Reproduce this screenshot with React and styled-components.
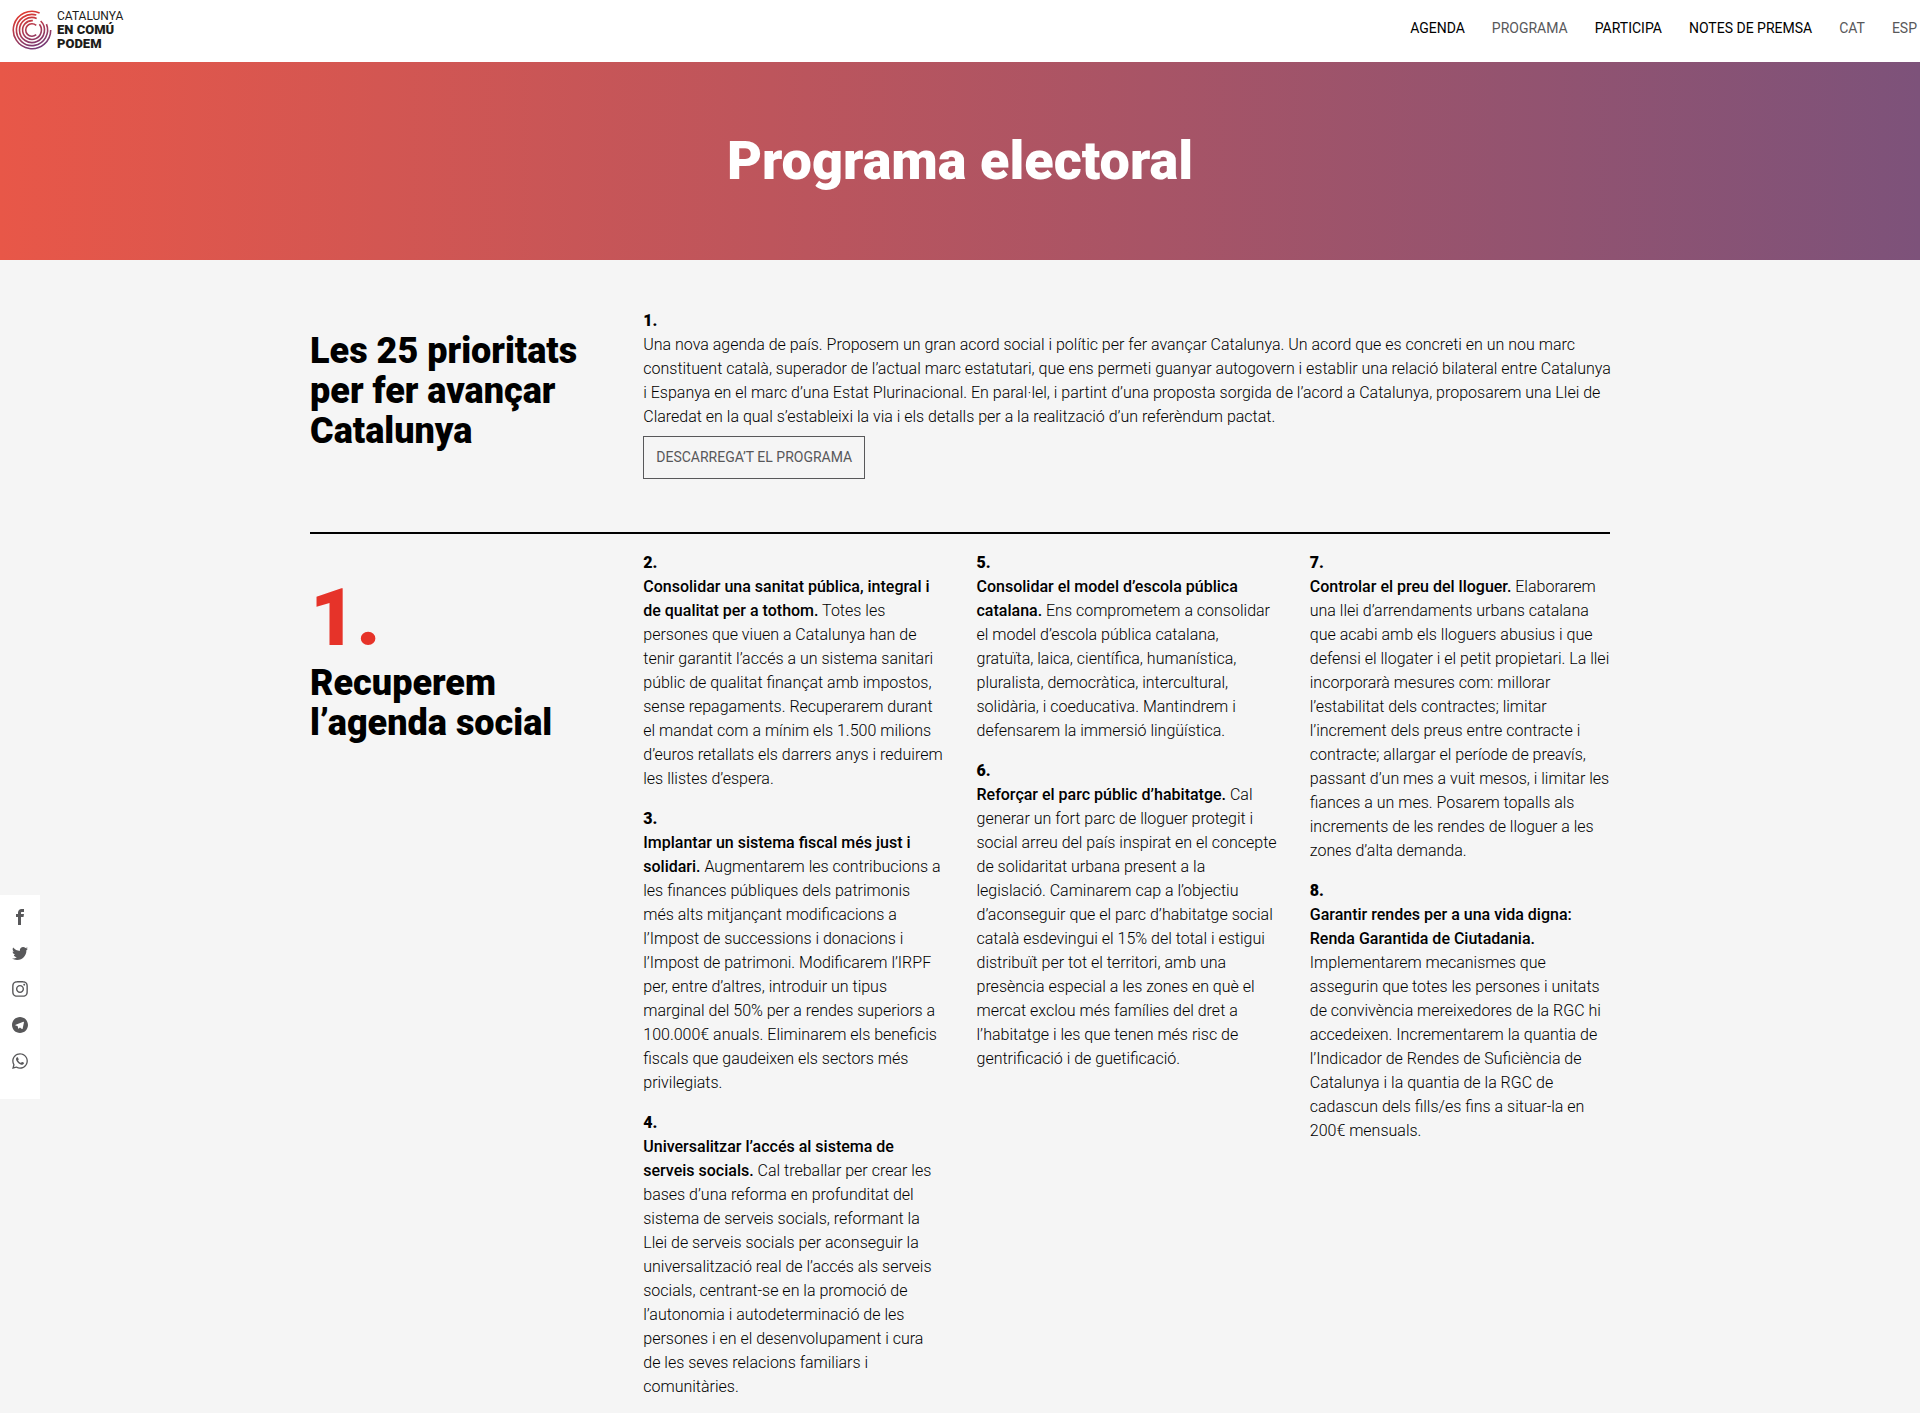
import React from "react";
import styled, { createGlobalStyle } from "styled-components";
import { ImFacebook, ImTwitter, ImTelegram } from "react-icons/im";
import { FaInstagram, FaWhatsapp } from "react-icons/fa";

const bodyFont = `Roboto, "Liberation Sans", sans-serif`;

const GlobalStyle = createGlobalStyle`
  *, *::before, *::after { box-sizing: border-box; }
  body {
    margin: 0;
    background: #f5f5f5;
    color: #000;
    font: 300 16px/24px ${bodyFont};
  }
  h1, h2, h3, p { margin: 0; }
  a { color: inherit; text-decoration: none; }
`;

const Header = styled.header`
  display: flex;
  justify-content: space-between;
  align-items: flex-start;
  height: 62px;
  padding: 0 3px 0 12px;
  background: #fff;
`;

const Brand = styled.a`
  display: flex;
  align-items: center;
  gap: 5px;
  padding-top: 9px;
  svg { display: block; }
`;

const BrandName = styled.span`
  display: flex;
  flex-direction: column;
  font: 400 12px/14px ${bodyFont};
  color: #1d1d1b;
  strong {
    font-size: 13px;
    font-weight: 900;
  }
`;

const Nav = styled.nav`
  display: flex;
  gap: 27px;
  padding-top: 16px;
`;

const NavLink = styled.a`
  font-size: 14px;
  font-weight: 400;
  text-transform: uppercase;
  color: ${({ $muted }) => ($muted ? "#58585a" : "#000")};
`;

const Hero = styled.section`
  padding: 64px 20px;
  background: linear-gradient(90deg, #e85748 0%, #7d527a 100%);
`;

const HeroTitle = styled.h1`
  font: 900 54px/70px ${bodyFont};
  color: #fff;
  text-align: center;
`;

const Main = styled.main`
  max-width: 1340px;
  margin: 0 auto;
  padding: 0 20px;
`;

const Section = styled.section`
  display: grid;
  grid-template-columns: repeat(4, 1fr);
  column-gap: 33px;
  padding: ${({ $intro }) => ($intro ? "48px 0 53px" : "16px 0 24px")};
  border-bottom: ${({ $intro }) => ($intro ? "2px solid #000" : "0")};
`;

const SectionHead = styled.div`
  padding-top: 23px;
`;

const SectionNumber = styled.div`
  font: 900 80px/90px ${bodyFont};
  color: #e63329;
`;

const SectionTitle = styled.h2`
  font: 900 36px/40px ${bodyFont};
`;

const Lead = styled.div`
  grid-column: span 3;
  margin-right: -4px;
`;

const ItemNumber = styled.h3`
  padding-top: 1px;
  font: 900 16px/24px ${bodyFont};
`;

const Column = styled.div`
  display: flex;
  flex-direction: column;
  gap: 15px;
`;

const ItemText = styled.p`
  strong { font-weight: 500; }
`;

const Download = styled.a`
  display: inline-block;
  margin-top: 7px;
  padding: 8px 12px 9px;
  border: 1px solid #58585a;
  font-size: 14px;
  font-weight: 400;
  text-transform: uppercase;
  color: #58585a;
  vertical-align: top;
`;

const Share = styled.aside`
  position: fixed;
  left: 0;
  top: 895px;
  display: flex;
  flex-direction: column;
  gap: 20px;
  padding: 14px 12px 30px;
  background: #fff;
`;

const ShareLink = styled.a`
  display: flex;
  align-items: center;
  justify-content: center;
  width: 16px;
  height: 16px;
  color: #58585a;
  svg { flex: none; }
`;

const navItems = [
  ["Agenda"],
  ["Programa", true],
  ["Participa"],
  ["Notes de premsa"],
  ["Cat", true],
  ["Esp", true],
];

const networks = [
  ["Facebook", ImFacebook, 16],
  ["Twitter", ImTwitter, 16],
  ["Instagram", FaInstagram, 18],
  ["Telegram", ImTelegram, 16],
  ["WhatsApp", FaWhatsapp, 18],
];

const columns = [
  [
    [2, "Consolidar una sanitat pública, integral i de qualitat per a tothom.", "Totes les persones que viuen a Catalunya han de tenir garantit l’accés a un sistema sanitari públic de qualitat finançat amb impostos, sense repagaments. Recuperarem durant el mandat com a mínim els 1.500 milions d’euros retallats els darrers anys i reduirem les llistes d’espera."],
    [3, "Implantar un sistema fiscal més just i solidari.", "Augmentarem les contribucions a les finances públiques dels patrimonis més alts mitjançant modificacions a l’Impost de successions i donacions i l’Impost de patrimoni. Modificarem l’IRPF per, entre d’altres, introduir un tipus marginal del 50% per a rendes superiors a 100.000€ anuals. Eliminarem els beneficis fiscals que gaudeixen els sectors més privilegiats."],
    [4, "Universalitzar l’accés al sistema de serveis socials.", "Cal treballar per crear les bases d’una reforma en profunditat del sistema de serveis socials, reformant la Llei de serveis socials per aconseguir la universalització real de l’accés als serveis socials, centrant-se en la promoció de l’autonomia i autodeterminació de les persones i en el desenvolupament i cura de les seves relacions familiars i comunitàries."],
  ],
  [
    [5, "Consolidar el model d’escola pública catalana.", "Ens comprometem a consolidar el model d’escola pública catalana, gratuïta, laica, científica, humanística, pluralista, democràtica, intercultural, solidària, i coeducativa. Mantindrem i defensarem la immersió lingüística."],
    [6, "Reforçar el parc públic d’habitatge.", "Cal generar un fort parc de lloguer protegit i social arreu del país inspirat en el concepte de solidaritat urbana present a la legislació. Caminarem cap a l’objectiu d’aconseguir que el parc d’habitatge social català esdevingui el 15% del total i estigui distribuït per tot el territori, amb una presència especial a les zones en què el mercat exclou més famílies del dret a l’habitatge i les que tenen més risc de gentrificació i de guetificació."],
  ],
  [
    [7, "Controlar el preu del lloguer.", "Elaborarem una llei d’arrendaments urbans catalana que acabi amb els lloguers abusius i que defensi el llogater i el petit propietari. La llei incorporarà mesures com: millorar l’estabilitat dels contractes; limitar l’increment dels preus entre contracte i contracte; allargar el període de preavís, passant d’un mes a vuit mesos, i limitar les fiances a un mes. Posarem topalls als increments de les rendes de lloguer a les zones d’alta demanda."],
    [8, "Garantir rendes per a una vida digna: Renda Garantida de Ciutadania.", "Implementarem mecanismes que assegurin que totes les persones i unitats de convivència mereixedores de la RGC hi accedeixen. Incrementarem la quantia de l’Indicador de Rendes de Suficiència de Catalunya i la quantia de la RGC de cadascun dels fills/es fins a situar-la en 200€ mensuals."],
  ],
];

/* Each ring: radius, start angle and end angle in degrees, clockwise from the right. */
const rings = [
  [18.7, 0, 294],
  [15.6, -22, 286],
  [12.5, -46, 292],
  [9.4, -38, 275],
  [6.3, 48, 312],
];

function arc([r, from, to]) {
  const point = (deg) => {
    const a = (deg * Math.PI) / 180;
    return `${(20 + r * Math.cos(a)).toFixed(2)} ${(20 + r * Math.sin(a)).toFixed(2)}`;
  };
  return `M${point(from)}A${r} ${r} 0 ${to - from > 180 ? 1 : 0} 1 ${point(to)}`;
}

function Logo() {
  return (
    <svg width="40" height="40" viewBox="0 0 40 40" fill="none" aria-hidden="true">
      <defs>
        <linearGradient id="ring" x1="12" y1="0" x2="28" y2="40" gradientUnits="userSpaceOnUse">
          <stop offset="0" stopColor="#e63a2c" />
          <stop offset="1" stopColor="#6d3a7c" />
        </linearGradient>
      </defs>
      {rings.map((ring) => (
        <path key={ring[0]} d={arc(ring)} stroke="url(#ring)" strokeWidth="1.6" />
      ))}
    </svg>
  );
}

export default function App() {
  return (
    <>
      <GlobalStyle />
      <Header>
        <Brand href="#">
          <Logo />
          <BrandName>
            <span>CATALUNYA</span>
            <strong>EN COMÚ</strong>
            <strong>PODEM</strong>
          </BrandName>
        </Brand>
        <Nav>
          {navItems.map(([label, muted]) => (
            <NavLink key={label} href="#" $muted={muted}>{label}</NavLink>
          ))}
        </Nav>
      </Header>
      <Hero>
        <HeroTitle>Programa electoral</HeroTitle>
      </Hero>
      <Main>
        <Section $intro>
          <SectionHead>
            <SectionTitle>Les 25 prioritats per fer avançar Catalunya</SectionTitle>
          </SectionHead>
          <Lead>
            <ItemNumber>1.</ItemNumber>
            <ItemText>
              Una nova agenda de país. Proposem un gran acord social i polític per fer avançar Catalunya. Un acord que es concreti en un nou marc constituent català, superador de l’actual marc estatutari, que ens permeti guanyar autogovern i establir una relació bilateral entre Catalunya i Espanya en el marc d’una Estat Plurinacional. En paral·lel, i partint d’una proposta sorgida de l’acord a Catalunya, proposarem una Llei de Claredat en la qual s’estableixi la via i els detalls per a la realització d’un referèndum pactat.
            </ItemText>
            <Download href="#">Descarrega’t el programa</Download>
          </Lead>
        </Section>
        <Section>
          <SectionHead>
            <SectionNumber>1.</SectionNumber>
            <SectionTitle>Recuperem l’agenda social</SectionTitle>
          </SectionHead>
          {columns.map((items) => (
            <Column key={items[0][0]}>
              {items.map(([number, title, text]) => (
                <article key={number}>
                  <ItemNumber>{number}.</ItemNumber>
                  <ItemText>
                    <strong>{title}</strong> {text}
                  </ItemText>
                </article>
              ))}
            </Column>
          ))}
        </Section>
      </Main>
      <Share>
        {networks.map(([name, Icon, size]) => (
          <ShareLink key={name} href="#" aria-label={name}>
            <Icon size={size} />
          </ShareLink>
        ))}
      </Share>
    </>
  );
}
